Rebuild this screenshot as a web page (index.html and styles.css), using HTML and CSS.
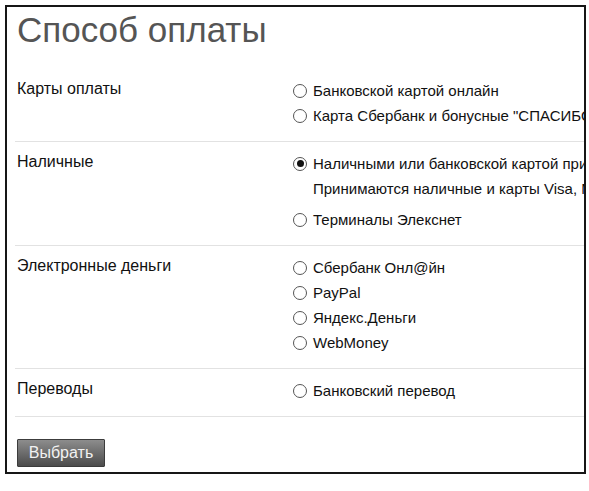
FILE: index.html
```html
<!DOCTYPE html>
<html lang="ru">
<head>
<meta charset="utf-8">
<link rel="stylesheet" href="styles.css">
</head>
<body>
<div class="frame">
  <h1 class="title">Способ оплаты</h1>
  <div class="section">
    <div class="label">Карты оплаты</div>
    <div class="options">
      <div class="opt"><span class="radio"></span>Банковской картой онлайн</div>
      <div class="opt"><span class="radio"></span>Карта Сбербанк и бонусные "СПАСИБО от Сбербанка"</div>
    </div>
  </div>
  <div class="section">
    <div class="label">Наличные</div>
    <div class="options">
      <div class="opt"><span class="radio checked"></span>Наличными или банковской картой при получении</div>
      <div class="desc">Принимаются наличные и карты Visa, MasterCard</div>
      <div class="opt spaced"><span class="radio"></span>Терминалы Элекснет</div>
    </div>
  </div>
  <div class="section">
    <div class="label">Электронные деньги</div>
    <div class="options">
      <div class="opt"><span class="radio"></span>Сбербанк Онл@йн</div>
      <div class="opt"><span class="radio"></span>PayPal</div>
      <div class="opt"><span class="radio"></span>Яндекс.Деньги</div>
      <div class="opt"><span class="radio"></span>WebMoney</div>
    </div>
  </div>
  <div class="section">
    <div class="label">Переводы</div>
    <div class="options">
      <div class="opt"><span class="radio"></span>Банковский перевод</div>
    </div>
  </div>
  <div class="actions">
    <button class="btn" type="button">Выбрать</button>
  </div>
</div>
</body>
</html>
```

FILE: styles.css
```css
html, body {
  margin: 0;
  padding: 0;
  background: #fff;
}
body {
  font-family: "Liberation Sans", Arial, sans-serif;
  color: #111;
}
.frame {
  box-sizing: border-box;
  margin: 5px 0 0 5px;
  width: 581px;
  height: 469px;
  border: 2px solid #161616;
  padding-left: 8px;
  overflow: hidden;
}
.title {
  margin: 3px 0 19px 2px;
  font-size: 35px;
  line-height: 40px;
  font-weight: normal;
  color: #555;
  white-space: nowrap;
}
.section {
  display: grid;
  grid-template-columns: 278px 1fr;
  padding: 9px 0 13px;
  border-bottom: 1px solid #e2e2e2;
}
.label {
  padding-left: 2px;
  font-size: 16px;
  line-height: 22px;
  white-space: nowrap;
}
.options {
  font-size: 15px;
  line-height: 25px;
  white-space: nowrap;
}
.opt {
  display: flex;
  align-items: center;
  gap: 6px;
}
.opt.spaced {
  margin-top: 6px;
}
.desc {
  padding-left: 20px;
}
.radio {
  box-sizing: border-box;
  flex: none;
  width: 14px;
  height: 14px;
  border: 1.5px solid #555;
  border-radius: 50%;
  background: #fff;
  display: flex;
  align-items: center;
  justify-content: center;
}
.radio.checked::after {
  content: "";
  width: 7px;
  height: 7px;
  border-radius: 50%;
  background: #111;
}
.actions {
  padding: 22px 0 0 2px;
}
.btn {
  width: 88px;
  height: 28px;
  border: 1px solid #3c3c3c;
  border-radius: 1px;
  background: linear-gradient(#8d8d8d, #4c4c4c);
  color: #f2f2f2;
  font-family: "Liberation Sans", Arial, sans-serif;
  font-size: 16px;
  padding: 0;
}
```
